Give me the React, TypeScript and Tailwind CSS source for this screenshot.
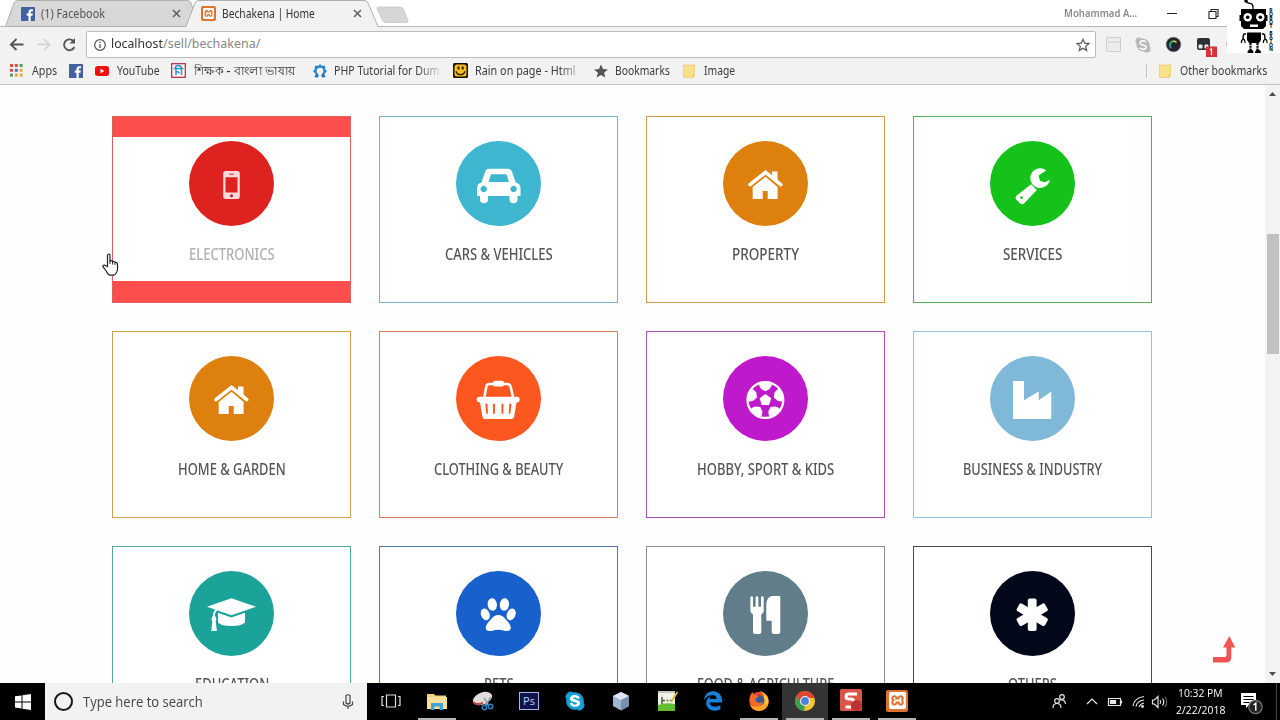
import { useLayoutEffect, useRef, useState } from "react";
import type { ReactNode } from "react";
import { FaEdgeLegacy, FaSkype } from "react-icons/fa";
import { SiXampp } from "react-icons/si";

interface FitTextProps {
  width: number;
  className?: string;
  children: string;
}

// Condenses a single line of text so that it fills exactly `width` pixels
function FitText({ width, className = "", children }: FitTextProps) {
  const ref = useRef<HTMLSpanElement>(null);
  const [scale, setScale] = useState(1);

  useLayoutEffect(() => {
    if (ref.current) setScale(width / ref.current.offsetWidth);
  }, [width, children]);

  return (
    <span className={`flex shrink-0 whitespace-nowrap ${className}`} style={{ width }}>
      <span ref={ref} className="shrink-0 origin-left" style={{ transform: `scaleX(${scale})` }}>
        {children}
      </span>
    </span>
  );
}

interface Category {
  label: string;
  width: number;
  color: string;
  border: string;
  icon: ReactNode;
  active?: boolean;
}

function PhoneIcon() {
  return (
    <path
      fill="#f6dcdc"
      fillRule="evenodd"
      d="M36.500 30h12q2.300 0 2.300 2.300v23.400q0 2.300-2.300 2.300h-12q-2.300 0-2.300-2.300V32.300q0-2.300 2.300-2.300zM36.500 36.200v15.200h12V36.200zM40.200 32.800v1h4.600v-1zM42.500 53.200a1.600 1.600 0 1 0 .01 0z"
    />
  );
}

function CarIcon() {
  return (
    <path
      fill="#fff"
      fillRule="evenodd"
      d="M25.500 41.500l3.500-10.300q1.200-3.400 4.500-3.400h18.200q3.300 0 4.500 3.400l3.500 10.300q4.800 1.200 4.800 6V55h-3v3.500q0 3.700-4 3.700t-4-3.700V55H32v3.500q0 3.700-4 3.700t-4-3.700V55h-3v-7.500q0-4.800 4.500-6zM35 33.300l-2.500 7.700h20.500l-2.500-7.700zM27.700 44.800a3.200 3.200 0 1 0 .01 0zM57.600 44.800a3.200 3.200 0 1 0 .01 0z"
    />
  );
}

function HouseIcon() {
  return (
    <g fill="#fff">
      <path d="M49 30.500h5.500v11l-5.500-4.800z" />
      <path d="M27 43.700L42.500 31.300 57.800 43.700" fill="none" stroke="#fff" strokeWidth="3.600" strokeLinecap="round" />
      <path d="M29.700 46L42.500 35.700 54.600 46v12h-9.900v-8h-5v8h-10z" />
    </g>
  );
}

function WrenchIcon() {
  return (
    <g fill="#fff">
      <path d="M56.200 29.500A9.800 9.800 0 1 0 59.800 38.800L55 41.300 50 40 48.600 34.600z" />
      <path
        fillRule="evenodd"
        d="M41 43.200l5.800 5.800-12.300 13q-2.300 2.300-4.300.5l-4-4.100q-1.500-2 .5-4zM31.500 55.200a1.400 1.400 0 1 0 .01 0z"
      />
    </g>
  );
}

function BasketIcon() {
  return (
    <g fill="#fff">
      <path d="M28.200 42l2-11q.4-3 3.300-3h17.700q2.900 0 3.500 3l2.500 11" fill="none" stroke="#fff" strokeWidth="2.600" />
      <rect x="37" y="24.800" width="11" height="5.600" rx="2" />
      <rect x="20.700" y="40.800" width="43" height="5.600" rx="2.400" />
      <path
        fillRule="evenodd"
        d="M23.800 45h37l-2.600 15.400q-.4 2.600-3 2.600H29.400q-2.600 0-3-2.600zM29.300 47.800l1 10h1.600l-.4-10zM36.900 47.800l.2 10h1.800v-10zM45.500 47.800v10h1.800l.2-10zM53.300 47.800l-.6 10h1.600l1.200-10z"
      />
    </g>
  );
}

function BallIcon() {
  return (
    <g>
      <circle cx="42.400" cy="44" r="17.900" fill="none" stroke="#fff" strokeWidth="2.200" />
      {[0, 72, 144, 216, 288].map((angle) => (
        <path
          key={angle}
          d="M35.900 28q6.500-3 13 0l-.6 2.300-1.700 2.700-4.200 2.200-4.200-2.200-1.700-2.700z"
          fill="#fff"
          transform={`rotate(${angle} 42.400 44)`}
        />
      ))}
      <path d="M42.400 38l5.800 4.200-2.200 6.900h-7.200l-2.200-6.900z" fill="#fff" />
    </g>
  );
}

function FactoryIcon() {
  return <path d="M24 25h9q1 0 1 1v18.300l14.700-8.700v8.700l12.600-8.700V62q0 1-1 1H24q-1 0-1-1V26q0-1 1-1z" fill="#fff" />;
}

function GraduationIcon() {
  return (
    <g fill="#fff">
      <path d="M18 35.700l24.400-8.400L67 35.700l-24.600 8.600z" />
      <path d="M29 41.800l13.400 4.800L56 41.800v9.700q-3.500 3.600-13.500 3.600T29 51.500z" />
      <path d="M27.700 38.500q-3 2.600-2.900 7.500" fill="none" stroke="#fff" strokeWidth="1.900" />
      <path d="M23.300 45.500h3.400l.6 3-.6 2 1.200 9.500h-5.600l1-9.500-.8-2z" />
    </g>
  );
}

function PawIcon() {
  return (
    <g fill="#fff">
      <ellipse cx="36.300" cy="33.500" rx="4.600" ry="6.400" transform="rotate(-8 36.300 33.500)" />
      <ellipse cx="48.400" cy="33.500" rx="4.600" ry="6.400" transform="rotate(8 48.400 33.500)" />
      <ellipse cx="29.300" cy="43.400" rx="4.300" ry="6" transform="rotate(-22 29.300 43.400)" />
      <ellipse cx="55.200" cy="43.400" rx="4.300" ry="6" transform="rotate(22 55.200 43.400)" />
      <path d="M42.300 44q4.500 0 7.700 4.800 4.900 4.700 4.900 8.200-.4 3.600-5.400 2.900-4.700-1.200-7.200-1.200t-7.200 1.200q-5 .7-5.400-2.900 0-3.500 4.900-8.200Q37.800 44 42.300 44z" />
    </g>
  );
}

function CutleryIcon() {
  return (
    <g fill="#fff">
      <path d="M27.400 26q1.300-1.400 2.600 0v9.700h2.600V26q1.400-1.400 2.800 0v9.700H38V26q1.400-1.400 2.700 0v13.500q0 2.700-2.400 4V61q0 2-2 2H32q-2 0-2-2V43.500q-2.600-1.300-2.600-4z" />
      <path d="M48.500 25h7.500q1.300 0 1.300 1.300V61q0 2-2 2h-4.600q-2 0-2-2V49.700h-5.400V33q.5-6.500 5.200-8z" />
    </g>
  );
}

function AsteriskIcon() {
  return (
    <g fill="#fff">
      <rect x="37.800" y="27.400" width="8.800" height="32.600" rx="2" />
      <rect x="37.800" y="27.400" width="8.800" height="32.600" rx="2" transform="rotate(60 42.200 43.700)" />
      <rect x="37.800" y="27.400" width="8.800" height="32.600" rx="2" transform="rotate(120 42.200 43.700)" />
    </g>
  );
}

const categories: Category[] = [
  { label: "ELECTRONICS", width: 86, color: "bg-[#dd221f]", border: "border-[#e0605f]", icon: <PhoneIcon />, active: true },
  { label: "CARS & VEHICLES", width: 108, color: "bg-[#3eb6d0]", border: "border-[#6fb7c6]", icon: <CarIcon /> },
  { label: "PROPERTY", width: 67, color: "bg-[#dd800e]", border: "border-[#cf9a4c]", icon: <HouseIcon /> },
  { label: "SERVICES", width: 59, color: "bg-[#14c21a]", border: "border-[#4fb054]", icon: <WrenchIcon /> },
  { label: "HOME & GARDEN", width: 108, color: "bg-[#dd800e]", border: "border-[#d2a050]", icon: <HouseIcon /> },
  { label: "CLOTHING & BEAUTY", width: 129, color: "bg-[#fc571e]", border: "border-[#d9805c]", icon: <BasketIcon /> },
  { label: "HOBBY, SPORT & KIDS", width: 137, color: "bg-[#bf19cc]", border: "border-[#ac50b4]", icon: <BallIcon /> },
  { label: "BUSINESS & INDUSTRY", width: 139, color: "bg-[#80b9d7]", border: "border-[#93c3d8]", icon: <FactoryIcon /> },
  { label: "EDUCATION", width: 74, color: "bg-[#1ba39a]", border: "border-[#4faaa2]", icon: <GraduationIcon /> },
  { label: "PETS", width: 30, color: "bg-[#1860cb]", border: "border-[#5077a8]", icon: <PawIcon /> },
  { label: "FOOD & AGRICULTURE", width: 137, color: "bg-[#607d89]", border: "border-[#87908f]", icon: <CutleryIcon /> },
  { label: "OTHERS", width: 49, color: "bg-[#020819]", border: "border-[#45484d]", icon: <AsteriskIcon /> },
];

function CategoryCard({ label, width, color, border, icon, active }: Category) {
  return (
    <div className={`flex h-[187px] flex-col items-center border bg-white ${border}`}>
      <div className={`h-5 w-full shrink-0 ${active ? "bg-[#fd4d4d]" : ""}`} />
      <div className={`mt-1 size-[85px] shrink-0 rounded-full ${color}`}>
        <svg viewBox="0 0 85 85" className="size-full">
          {icon}
        </svg>
      </div>
      <div className={`mt-4 h-6 text-[16.5px] font-medium leading-6 ${active ? "text-[#b0b0b0]" : "text-[#555]"}`}>
        <FitText width={width}>{label}</FitText>
      </div>
      <div className={`mt-auto h-[21px] w-full shrink-0 ${active ? "bg-[#fd4d4d]" : ""}`} />
    </div>
  );
}

function FacebookIcon() {
  return (
    <svg viewBox="0 0 14 14" className="size-3.5 shrink-0">
      <rect width="14" height="14" rx="0.500" fill="#4460a0" />
      <path d="M9.700 14V8.700h1.800l.3-2.100H9.700V5.200q0-1 1.100-1H12V2.300q-4.500-.8-4.500 2.600v1.700H5.700v2.100h1.800V14z" fill="#fff" />
    </svg>
  );
}

function XamppIcon({ box, glyph }: { box: string; glyph: string }) {
  return (
    <span className={`flex shrink-0 items-center justify-center rounded-[2px] bg-[#dc7430] ${box}`}>
      <SiXampp className={`text-white ${glyph}`} />
    </span>
  );
}

function CloseIcon() {
  return (
    <svg viewBox="0 0 9 9" className="size-[9px] shrink-0">
      <path d="M1 1l7 7M8 1L1 8" stroke="#5f5f5f" strokeWidth="1.500" />
    </svg>
  );
}

function TabStrip() {
  return (
    <div className="relative h-[27px] shrink-0 bg-white">
      <svg viewBox="0 0 1280 27" className="absolute inset-0 h-full w-full">
        <path d="M0 26.500H1280" stroke="#b7b8b7" />
        <path d="M5.500 26.500L14 3Q15 .5 18 .5H187Q190 .5 191 3L199 26.500z" fill="#d8d8d8" stroke="#b0b0b0" />
        <path d="M186 27L195 3Q196 .5 199 .5H364Q367 .5 368 3L378 27z" fill="#f2f2f2" />
        <path d="M186 26.500L195 3Q196 .5 199 .5H364Q367 .5 368 3L378 26.500" fill="none" stroke="#b0b0b0" />
        <path d="M378.500 7h22q2 0 2.700 2l4.800 11.500q.5 2-1.500 2h-21q-2 0-2.800-2L377 9q-.5-2 1.500-2z" fill="#d6d6d8" stroke="#c3c3c5" strokeWidth="0.700" />
      </svg>
      <div className="relative flex h-full items-center pl-[21px] text-[12px] text-[#555]">
        <FacebookIcon />
        <FitText width={64} className="ml-1.5">(1) Facebook</FitText>
        <span className="ml-[67px] flex"><CloseIcon /></span>
        <span className="ml-[20px] flex"><XamppIcon box="size-[15px]" glyph="size-[11px]" /></span>
        <FitText width={93} className="ml-1.5 text-[#333]">Bechakena | Home</FitText>
        <span className="ml-[38px] flex"><CloseIcon /></span>
        <FitText width={73} className="ml-[702px] text-[11px] font-semibold text-[#8a8a8a]">Mohammad A...</FitText>
        <svg viewBox="0 0 60 20" className="ml-[27px] h-5 w-[60px]">
          <path d="M3 9.500h10M45 7.500h7v7h-7zM47 7V5.500h7v7h-1.500" fill="none" stroke="#222" strokeWidth="1.100" />
        </svg>
      </div>
    </div>
  );
}

function AddressBar() {
  return (
    <div className="flex h-[33px] shrink-0 items-center pl-[9px] pt-0.5">
      <svg viewBox="0 0 70 20" className="h-5 w-[70px] shrink-0">
        <path d="M14.500 9.500H2M7.500 4l-5.700 5.500 5.700 5.500" fill="none" stroke="#555" strokeWidth="1.800" />
        <path d="M28 9.500h12.500M35 4l5.700 5.500L35 15" fill="none" stroke="#d2d2d2" strokeWidth="1.500" />
        <path d="M65.400 12a5.400 5.400 0 1 1-1.300-6.200" fill="none" stroke="#555" strokeWidth="1.900" />
        <path d="M66 3v5.500h-5.500z" fill="#555" />
      </svg>
      <div className="ml-[7px] flex h-[27px] w-[1010px] shrink-0 items-center rounded-[2px] border border-[#bcbcbc] bg-white pl-[7px] pr-[5px]">
        <svg viewBox="0 0 12 12" className="size-3 shrink-0">
          <circle cx="6" cy="6" r="5.300" fill="none" stroke="#555" strokeWidth="1.200" />
          <path d="M6 5.200v3.800M6 2.800v1.300" stroke="#555" strokeWidth="1.400" />
        </svg>
        <FitText width={52} className="ml-[5px] text-[12.5px] text-[#333]">localhost</FitText>
        <FitText width={97} className="text-[12.5px] text-[#888]">/sell/bechakena/</FitText>
        <svg viewBox="0 0 14 14" className="ml-auto size-3.5">
          <path d="M7 1.300l1.700 3.900 4.200.4-3.200 2.800 1 4.100L7 10.300l-3.700 2.200 1-4.100L1.100 5.600l4.200-.4z" fill="none" stroke="#555" strokeWidth="1.200" />
        </svg>
      </div>
      <svg viewBox="0 0 140 24" className="ml-1 h-6 w-[140px] shrink-0">
        <path d="M6.500 4.500h14v14h-14zM6.500 9h14" fill="#ececec" stroke="#cfcfcf" />
        <g fill="#b9b9b9">
          <circle cx="39" cy="8" r="3.600" />
          <circle cx="47" cy="16" r="3.600" />
          <circle cx="43" cy="12" r="6.500" />
        </g>
        <path d="M46 9.300q-.8-1.600-3-1.600-3 .1-3 2.100 0 1.700 3 2.200t3 2.200q0 2.100-3 2.100-2.400 0-3.200-1.700" fill="none" stroke="#fff" strokeWidth="1.400" />
        <circle cx="73.500" cy="11.500" r="7.300" fill="#25242c" stroke="#777" strokeWidth="0.600" />
        <path d="M70 13a4 4 0 0 1 3-4.800" fill="none" stroke="#27b36b" strokeWidth="2" />
        <path d="M73 8.200a4 4 0 0 1 3.500 1.300" fill="none" stroke="#d9c937" strokeWidth="1.800" />
        <path d="M70 13q.3 1.500 1.300 2.200" fill="none" stroke="#318fce" strokeWidth="1.800" />
        <rect x="97" y="5" width="13" height="12" rx="2" fill="#2d3036" />
        <rect x="98.500" y="11.500" width="4" height="4" rx="1" fill="#eee" />
        <rect x="104.500" y="11.500" width="4" height="4" rx="1" fill="#eee" />
        <path d="M106 13.500h11v11h-11z" fill="#d9303b" />
        <path d="M110 17l1.500-1.200v6.500" fill="none" stroke="#fff" strokeWidth="1.200" />
        <path d="M127.500 7q-2 4 0 8.500z" fill="#d9695f" />
      </svg>
    </div>
  );
}

function FolderIcon() {
  return (
    <svg viewBox="0 0 12 14" className="h-3.5 w-3 shrink-0">
      <path d="M.5 1h11v9.500l-2 .5v2.500H.5z" fill="#fbe08a" stroke="#eccd6c" strokeWidth="0.800" />
      <path d="M9.500 13.500V11h2v2.500z" fill="#f0cf67" />
    </svg>
  );
}

function AppsIcon() {
  const colors = ["#d95040", "#d95040", "#4f9e5c", "#d95040", "#3f78d0", "#e3a93c", "#4f9e5c", "#e3a93c", "#e3a93c"];
  return (
    <svg viewBox="0 0 13 13" className="size-[13px] shrink-0">
      {colors.map((color, i) => (
        <rect key={i} x={(i % 3) * 4.8} y={Math.floor(i / 3) * 4.8} width="3" height="3" fill={color} />
      ))}
    </svg>
  );
}

function BookmarksBar() {
  return (
    <div className="flex h-[25px] shrink-0 items-center border-b border-[#c2c5be] pb-[3px] pl-2.5 text-[12px] text-[#3c3c3c]">
      <AppsIcon />
      <FitText width={25} className="ml-[9px]">Apps</FitText>
      <span className="ml-3 flex"><FacebookIcon /></span>
      <svg viewBox="0 0 14 12" className="ml-[12px] h-3 w-3.5 shrink-0">
        <rect y="1" width="14" height="10" rx="2.500" fill="#ee1111" />
        <path d="M5.500 3.800v4.400L9.300 6z" fill="#fff" />
      </svg>
      <FitText width={43} className="ml-2">YouTube</FitText>
      <svg viewBox="0 0 15 15" className="ml-[11px] size-[15px] shrink-0">
        <rect x="0.700" y="0.700" width="13.600" height="13.600" fill="#fff" stroke="#b92e48" strokeWidth="1.300" />
        <path d="M2.500 5.500h10M5 5.500q-1.500-3 2-3t3.500 3v6.500M5 6v6M5 8.500q3 0 3 2" fill="none" stroke="#2f8fd0" strokeWidth="1.500" />
      </svg>
      <FitText width={101} className="ml-2 font-medium text-[#333]">শিক্ষক - বাংলা ভাষায়</FitText>
      <svg viewBox="0 0 14 14" className="ml-[18px] size-3.5 shrink-0">
        <path d="M7 0l1.600 1.800h3.600v3.400L14 7l-1.800 2.200H10L7.500 4 4 9.200H1.800L0 7l1.800-1.800V1.800h3.600z" fill="#2a86cb" />
        <circle cx="7" cy="7" r="4.300" fill="#f2f2f2" stroke="#2a86cb" strokeWidth="2" />
        <path d="M4.800 10h4.400v4H4.800z" fill="#f2f2f2" />
        <path d="M1.500 13l2-4 2.300 2.300-1 2.200zM12.500 13l-2-4-2.300 2.300 1 2.200z" fill="#1b6fb5" />
      </svg>
      <div className="ml-[7px] flex [mask-image:linear-gradient(to_right,black_80%,transparent_104%)]">
        <FitText width={105}>PHP Tutorial for Dum</FitText>
      </div>
      <svg viewBox="0 0 15 15" className="ml-[14px] size-[15px] shrink-0">
        <rect width="15" height="15" rx="1.500" fill="#17140a" />
        <rect x="1.500" y="1.500" width="12" height="12" rx="2.500" fill="#f8bf1f" />
        <path d="M4.500 3.500h2v3h-2zM8.700 3.500h2v3h-2z" fill="#2c210a" />
        <path d="M3 8.300q1 3.400 4.500 3.400T12 8.300" fill="none" stroke="#2c210a" strokeWidth="1.300" />
      </svg>
      <div className="ml-[7px] flex [mask-image:linear-gradient(to_right,black_84%,transparent_108%)]">
        <FitText width={101}>Rain on page - Html</FitText>
      </div>
      <svg viewBox="0 0 14 14" className="ml-[18px] size-3.5 shrink-0">
        <path d="M7 .5l2 4.600 4.900.4-3.800 3.300L11.300 13.500 7 11l-4.300 2.500 1.200-4.700L.1 5.500 5 5.100z" fill="#555" />
      </svg>
      <FitText width={55} className="ml-[7px]">Bookmarks</FitText>
      <span className="ml-[13px] flex"><FolderIcon /></span>
      <FitText width={31} className="ml-[9px]">Image</FitText>
      <div className="ml-auto mr-[13px] flex h-full items-center">
        <div className="mr-3 mt-px h-3.5 w-px bg-[#c6c6c6]" />
        <FolderIcon />
        <FitText width={87} className="ml-[9px]">Other bookmarks</FitText>
      </div>
    </div>
  );
}

function RobotLogo() {
  return (
    <div className="absolute right-0 top-0 flex h-[53px] w-[53px] bg-white">
      <svg viewBox="0 0 41 53" className="h-[53px] w-[41px]">
        <path d="M26 9q1-6-5-6l-2-2" fill="none" stroke="#000" strokeWidth="1.300" />
        <circle cx="19" cy="1" r="1.700" />
        <path d="M14 9h25v17l-3 3H17l-3-3z" />
        <path d="M12.500 15h2v6h-2zM38.500 15h2v6h-2z" />
        <circle cx="20.700" cy="17.300" r="4.200" fill="#fff" />
        <circle cx="33.300" cy="17.300" r="4.200" fill="#fff" />
        <circle cx="20.700" cy="17.300" r="1.800" />
        <circle cx="33.300" cy="17.300" r="1.800" />
        <path d="M23 24.500h8V27h-8z" fill="#fff" />
        <path d="M20 32.500h14V40l-2 3H22l-2-3z" />
        <path d="M19 34h-2q-1 1-1 5M35 34h2q1 1 1 5" fill="none" stroke="#000" strokeWidth="1.500" />
        <path d="M14.500 43q-.5-3 1.500-3.500t2 3.500M36.500 43q-.5-3 1.500-3.500t2 3.500" fill="none" stroke="#000" strokeWidth="1.200" />
        <path d="M23.500 43v7M30.500 43v7" stroke="#000" strokeWidth="2.200" strokeDasharray="2 .8" />
        <path d="M20.500 53q0-3.500 3-3.500t3 3.500zM28 53q0-3.500 3-3.500t3 3.500z" />
      </svg>
      <div className="mt-[9px] flex w-1.5 flex-col items-center text-[5px] font-bold leading-[3.9px] text-black">
        {"ROBOT BATON".split("").map((letter, i) => (
          <span key={i} className="h-[3.9px]">{letter}</span>
        ))}
      </div>
    </div>
  );
}

function Scrollbar() {
  return (
    <div className="flex w-[15px] shrink-0 flex-col items-center bg-[#f3f3f3]">
      <svg viewBox="0 0 7 4" className="mt-[7px] h-1 w-[7px]">
        <path d="M0 4l3.500-4L7 4z" fill="#505050" />
      </svg>
      <div className="mt-[138px] h-[120px] w-3 bg-[#c1c1c1]" />
      <svg viewBox="0 0 7 4" className="mb-[7px] mt-auto h-1 w-[7px]">
        <path d="M0 0l3.500 4L7 0z" fill="#505050" />
      </svg>
    </div>
  );
}

function ExplorerIcon() {
  return (
    <svg viewBox="0 0 22 18" className="h-[18px] w-[22px]">
      <path d="M1 2h7l1.500 1.500H20V16H1z" fill="#f3d27a" />
      <path d="M1 5h20v12H1z" fill="#fbe09a" />
      <path d="M5 18v-7h12v7h-3.500v-3.500h-5V18z" fill="#3ea5d6" />
    </svg>
  );
}

function SnippingIcon() {
  return (
    <svg viewBox="0 0 22 22" className="size-[22px]">
      <ellipse cx="10.500" cy="8.500" rx="10" ry="6" fill="#e4dcdc" transform="rotate(-22 10.500 8.500)" />
      <path d="M1 12q5 4 10 .5" fill="none" stroke="#b94a42" strokeWidth="2" />
      <path d="M12 8l5 8M19 7l-6 9" stroke="#94a3ae" strokeWidth="1.600" />
      <circle cx="12.500" cy="17.500" r="2.200" fill="none" stroke="#2c7fb7" strokeWidth="1.600" />
      <circle cx="18.500" cy="16.500" r="2.200" fill="none" stroke="#2c7fb7" strokeWidth="1.600" />
    </svg>
  );
}

function PhotoshopIcon() {
  return (
    <span className='flex h-[18px] w-5 items-center justify-center border border-[#a9b5ec] bg-[#10134c] font-["Open_Sans"] text-[11px] leading-none text-[#c5cdf8]'>
      Ps
    </span>
  );
}

function CubeIcon() {
  return (
    <svg viewBox="0 0 20 20" className="size-5">
      <path d="M10 1l8 4v10l-8 4.500L2 15V5z" fill="#9fb4cd" />
      <path d="M10 1l8 4-8 4-8-4z" fill="#dce7f2" />
      <path d="M10 9l8-4v10l-8 4.500z" fill="#7590b1" />
    </svg>
  );
}

function NotepadIcon() {
  return (
    <svg viewBox="0 0 22 22" className="size-[22px]">
      <path d="M2 1h17v20H2z" fill="#eef3e5" />
      <path d="M2 15q8-3 17-1v7H2z" fill="#63bd32" />
      <path d="M2 1h17v2H2z" fill="#c6c6bd" />
      <path d="M6 7v7M6 10.500h3M10.500 10.500h2M14 10.500h2" stroke="#45603a" strokeWidth="1.500" />
      <path d="M21.500 2L15 12" stroke="#d4bd2a" strokeWidth="1.800" />
    </svg>
  );
}

function FirefoxIcon() {
  return (
    <svg viewBox="0 0 22 22" className="size-[22px]">
      <circle cx="11" cy="11.500" r="9.700" fill="#e8452d" />
      <path d="M12 1q9 3 8.700 11-.7 8-9.700 9-7-.5-9-6 8 4 13-2 3-6-3-12z" fill="#ffa622" />
      <circle cx="11" cy="10.500" r="5.300" fill="#2d579e" />
      <path d="M1.500 10q0-5 3-8l1.500 3q3-.5 5 1.500l-3 2q-1 3 2 4 3 .5 5-1-1 5-6 5-7-1-7.500-6.500z" fill="#f26b24" />
      <path d="M17 6q2.500 3 1.500 8" fill="none" stroke="#ffd83d" strokeWidth="2" />
    </svg>
  );
}

function ChromeIcon() {
  return (
    <svg viewBox="0 0 22 22" className="size-[22px]">
      <circle cx="11" cy="11" r="10" fill="#f5c62c" />
      <path d="M2.300 6A10 10 0 0 1 19.700 6L20.500 8H11L6.700 13.500z" fill="#df4433" />
      <path d="M2.300 6l4.400 7.500L11 16l-1 5A10 10 0 0 1 2.300 6z" fill="#3e9c52" />
      <circle cx="11" cy="11" r="5" fill="#f3f3f3" />
      <circle cx="11" cy="11" r="3.900" fill="#4a83dd" />
    </svg>
  );
}

function CamtasiaIcon() {
  return (
    <svg viewBox="0 0 23 23" className="size-[23px]">
      <rect width="22" height="22" rx="1.500" fill="#dc5348" />
      <path d="M17 5H9Q6 5 6 7.500T9 10h1.500q3.500 0 3.500 3M11 18H5.500" fill="none" stroke="#fff" strokeWidth="3" />
      <circle cx="16.500" cy="16.500" r="5.500" fill="#bd3034" />
    </svg>
  );
}

function TaskViewIcon() {
  return (
    <svg viewBox="0 0 20 14" className="h-3.5 w-5">
      <path d="M5.500 1h9v12h-9zM3 2.500H1v9h2M17 2.500h2v9h-2" fill="none" stroke="#ddd" strokeWidth="1.200" />
    </svg>
  );
}

const apps = [
  { name: "task-view", icon: <TaskViewIcon />, open: false },
  { name: "explorer", icon: <ExplorerIcon />, open: true },
  { name: "snipping", icon: <SnippingIcon />, open: false },
  { name: "photoshop", icon: <PhotoshopIcon />, open: false },
  { name: "skype", icon: <FaSkype className="size-[22px] rounded-full bg-[radial-gradient(white_50%,transparent_51%)] text-[#139fd8]" />, open: false },
  { name: "cube", icon: <CubeIcon />, open: false },
  { name: "notepad", icon: <NotepadIcon />, open: false },
  { name: "edge", icon: <FaEdgeLegacy className="size-5 text-[#1583dc]" />, open: false },
  { name: "firefox", icon: <FirefoxIcon />, open: true },
  { name: "chrome", icon: <ChromeIcon />, open: true },
  { name: "camtasia", icon: <CamtasiaIcon />, open: true },
  { name: "xampp", icon: <XamppIcon box="size-[22px]" glyph="size-[17px]" />, open: true },
];

function Taskbar() {
  return (
    <div className="flex h-[37px] shrink-0 bg-black text-white">
      <div className="flex w-[45px] items-center justify-center">
        <svg viewBox="0 0 16 16" className="size-4">
          <path d="M0 2.300L6.500 1.400v6H0zM7.500 1.200L16 0v7.500H7.500zM0 8.500h6.500v6L0 13.600zM7.500 8.500H16V16l-8.500-1.200z" fill="#fff" />
        </svg>
      </div>
      <div className="mr-px flex w-[322px] items-center bg-[#f2f2f2] pl-[9px] pr-[13px]">
        <span className="size-[19px] rounded-full border-[2.5px] border-[#161616]" />
        <FitText width={120} className='ml-[10px] font-["Open_Sans"] text-[14px] text-[#444]'>Type here to search</FitText>
        <svg viewBox="0 0 12 16" className="ml-auto h-4 w-3">
          <path d="M4 1.500q2-1.500 4 0V9q-2 2-4 0zM1.500 7.500v3q4.500 3.500 9 0v-3M6 12v3" fill="none" stroke="#444" strokeWidth="1.200" />
        </svg>
      </div>
      {apps.map((app) => (
        <div key={app.name} className={`flex w-[46px] flex-col items-center ${app.name === "chrome" ? "bg-[#343434]" : ""}`}>
          <div className="flex h-[35px] items-center">{app.icon}</div>
          <div className={`h-0.5 w-[38px] ${app.open ? "bg-[#b5b5b5]" : ""}`} />
        </div>
      ))}
      <div className="ml-auto flex items-center">
        <svg viewBox="0 0 120 20" className="h-5 w-[120px]" fill="none" stroke="#e5e5e5" strokeWidth="1.200">
          <circle cx="6" cy="9" r="2.300" />
          <path d="M2 16q0-4.500 4-4.500t4 4.500" />
          <circle cx="11" cy="5" r="2.300" />
          <path d="M9 8q5-1 5.500 4" />
          <path d="M36 12l5-5 5 5" />
          <path d="M57.500 6.500h12v7h-12zM70.500 8.500v3" />
          <path d="M59.500 8.500h5v3h-5z" fill="#e5e5e5" />
          <path d="M82 14q1-8 11-9.500M85 14.500q1-5.500 8-6.500M88 15q1-3 5-4" />
          <circle cx="91.500" cy="14.500" r="0.800" fill="#e5e5e5" />
          <path d="M101.500 8h2l3.500-3.500v11L103.500 12h-2zM109 8q1.500 2 0 4M111.500 6.500q2.500 3.500 0 7" />
          <path d="M114 5q3.500 5 0 10" stroke="#666" />
        </svg>
        <div className='ml-[5px] mb-0.5 flex flex-col items-center font-["Open_Sans"] text-[11.5px] leading-[17px]'>
          <FitText width={45}>10:32 PM</FitText>
          <FitText width={49}>2/22/2018</FitText>
        </div>
        <svg viewBox="0 0 26 26" className="ml-[15px] mr-[10px] size-[26px]">
          <path d="M1 4h15v12H9l-3 3v-3H1z" fill="#fff" />
          <path d="M3.500 7.500h10M3.500 10.500h10M3.500 13.500h6" stroke="#000" strokeWidth="1.100" />
          <circle cx="15.500" cy="18" r="6.700" fill="#222" stroke="#777" strokeWidth="1.200" />
          <path d="M13.500 16l2.300-1.800v7.500" fill="none" stroke="#fff" strokeWidth="1.400" />
        </svg>
        <div className="mr-[3px] h-[37px] w-px bg-[#444]" />
      </div>
    </div>
  );
}

export default function App() {
  return (
    <div className='relative flex h-[720px] w-[1280px] flex-col overflow-hidden bg-[#f2f2f2] font-["Noto_Sans",sans-serif]'>
      <TabStrip />
      <AddressBar />
      <BookmarksBar />
      <main className="flex min-h-0 flex-1 bg-[#fefefe]">
        <div className="flex-1 overflow-hidden pl-28 pt-[31px]">
          <div className="grid grid-cols-[repeat(4,239px)] gap-7">
            {categories.map((category) => (
              <CategoryCard key={category.label} {...category} />
            ))}
          </div>
        </div>
        <Scrollbar />
      </main>
      <Taskbar />

      <RobotLogo />

      {/* Back to top */}
      <svg viewBox="0 0 24 28" className="absolute left-[1212px] top-[636px] h-7 w-6">
        <path d="M17.300 0l6 11.500h-4V21q0 5.500-5.500 5.500H1v-5.500h11.500q2 0 2-2v-7.500h-3.500z" fill="#f15454" />
      </svg>

      {/* Hand cursor */}
      <svg viewBox="0 0 17 24" className="absolute left-[102px] top-[253px] h-6 w-[17px]">
        <path
          d="M5.500 13.500V2.500Q5.500 1 6.800 1T8 2.500V8q2.200-1 2.600.7 2-.8 2.400.7 2.500-.3 2.500 1.800v5q-.5 4.500-4 6H7.500q-2-1.500-3.500-4.500l-3-4Q.5 12 2.500 12z"
          fill="#fff"
          stroke="#222"
          strokeWidth="1.200"
        />
        <path d="M8 7.500V11M10.600 8.500V11.500M13 9.500V12" stroke="#222" strokeWidth="1" />
      </svg>
    </div>
  );
}
